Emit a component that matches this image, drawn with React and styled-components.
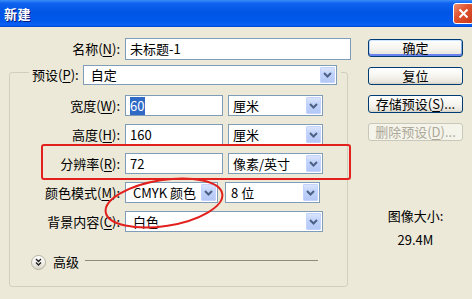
import React from "react";
import styled, { createGlobalStyle } from "styled-components";

const GlobalStyle = createGlobalStyle`
  html, body {
    margin: 0;
    padding: 0;
    background: #ece9d8;
    overflow: hidden;
  }
`;

const Window = styled.div`
  position: relative;
  width: 472px;
  height: 299px;
  overflow: hidden;
  background: #ece9d8;
  font-family: "Noto Sans CJK SC", "Noto Sans", sans-serif;
  font-size: 13px;
  line-height: 16px;
  color: #000;
`;

const TitleBar = styled.div`
  height: 27px;
  box-sizing: border-box;
  padding-left: 4px;
  display: flex;
  align-items: center;
  justify-content: space-between;
  background: linear-gradient(
    to bottom,
    #3c8ef8 0%,
    #0f62ee 12%,
    #0055e5 45%,
    #0059ec 80%,
    #0a63f3 92%,
    #0046cc 100%
  );
`;

const Title = styled.span`
  color: #fff;
  font-weight: bold;
  font-size: 13px;
  letter-spacing: 0.5px;
  text-shadow: 1px 1px 0 #0a1c7a;
`;

const CloseButton = styled.div`
  width: 21px;
  height: 21px;
  margin-right: -2px;
  box-sizing: border-box;
  border: 1px solid #fff;
  border-radius: 3px;
  background: linear-gradient(135deg, #ec8f72 0%, #e1552f 40%, #c8381a 100%);
  display: flex;
  align-items: center;
  justify-content: center;
`;

const Body = styled.div`
  display: flex;
  gap: 17px;
`;

const LeftCol = styled.div`
  width: 351px;
  padding-top: 11px;
  display: flex;
  flex-direction: column;
`;

const RightCol = styled.div`
  width: 95px;
  padding-top: 12px;
  display: flex;
  flex-direction: column;
`;

const Row = styled.div`
  display: flex;
  align-items: center;
  gap: ${(p) => p.$gap ?? 5}px;
`;

const Label = styled.span`
  width: ${(p) => (p.$w ? `${p.$w}px` : "auto")};
  text-align: right;
  white-space: nowrap;
`;

const Key = styled.span`
  text-decoration: underline;
  text-underline-offset: 2px;
`;

const Edit = styled.div`
  width: ${(p) => p.$w}px;
  height: ${(p) => p.$h ?? 21}px;
  box-sizing: border-box;
  border: 1px solid #7f9db9;
  background: #fff;
  padding-left: 4px;
  display: flex;
  align-items: center;
  white-space: nowrap;
`;

const Selected = styled.span`
  background: #316ac5;
  color: #fff;
  padding: 1px 1px 1px 0;
`;

const SelectBox = styled.div`
  width: ${(p) => p.$w}px;
  height: ${(p) => p.$h ?? 21}px;
  box-sizing: border-box;
  border: 1px solid #7f9db9;
  background: #fff;
  padding: 1px 1px 1px ${(p) => p.$pad ?? 4}px;
  display: flex;
  align-items: center;
  justify-content: space-between;
  white-space: nowrap;
`;

const DropButton = styled.div`
  width: 15px;
  height: 100%;
  box-sizing: border-box;
  border: 1px solid #c3d3fd;
  border-radius: 1px;
  background: linear-gradient(to bottom, #dbe5fb 0%, #c1d3fb 40%, #b4c8f6 100%);
  display: flex;
  align-items: center;
  justify-content: center;
`;

const Group = styled.fieldset`
  margin: -1px 0 0 9px;
  width: 339px;
  box-sizing: border-box;
  border: 1px solid #d0d0bf;
  border-radius: 3px;
  padding: 10px 0 16px 0;
  display: flex;
  flex-direction: column;
  gap: 8px;
`;

const Legend = styled.legend`
  margin-left: 19px;
  padding: 6px 4px 0 3px;
  display: flex;
  align-items: center;
  gap: 4px;
`;

const AdvancedRow = styled.div`
  margin-top: 14px;
  margin-left: 21px;
  height: 16px;
  display: flex;
  align-items: center;
  gap: 7px;
`;

const RoundToggle = styled.div`
  width: 15px;
  height: 15px;
  flex-shrink: 0;
  box-sizing: border-box;
  border-radius: 50%;
  border: 1px solid #b5b2a2;
  background: linear-gradient(to bottom, #ffffff 0%, #f1efe8 55%, #d8d5c8 100%);
  display: flex;
  align-items: center;
  justify-content: center;
`;

const Rule = styled.div`
  flex: none;
  width: 233px;
  height: 1px;
  margin: 0 0 3px -1px;
  background: #8e8b7c;
`;

const ButtonStack = styled.div`
  display: flex;
  flex-direction: column;
  gap: 10px;
`;

const Button = styled.div`
  height: 18px;
  box-sizing: border-box;
  border: 1px solid ${(p) => (p.$disabled ? "#c9c7ba" : "#003c74")};
  border-radius: 3px;
  background: ${(p) =>
    p.$disabled
      ? "#f5f4ea"
      : "linear-gradient(to bottom, #ffffff 0%, #f6f5f0 50%, #e9e7de 85%, #d6d0c5 100%)"};
  color: ${(p) => (p.$disabled ? "#aca899" : "#000")};
  box-shadow: ${(p) =>
    p.$default
      ? "inset 0 1px 0 #cee7ff, inset 0 -2px 0 #6982ee, inset 1px 0 0 #bcd4f6, inset -1px 0 0 #89ade4"
      : "none"};
  display: flex;
  align-items: center;
  justify-content: center;
  white-space: nowrap;
`;

const Info = styled.div`
  margin-top: 67px;
  display: flex;
  flex-direction: column;
  align-items: center;
  gap: 8px;
`;

const MarkRect = styled.div`
  position: absolute;
  left: 41px;
  top: 144px;
  width: 310px;
  height: 36px;
  box-sizing: border-box;
  border: 2px solid #e2211f;
  border-radius: 3px;
  pointer-events: none;
`;

const MarkEllipse = styled.svg`
  position: absolute;
  left: 98px;
  top: 172px;
  pointer-events: none;
`;

function Arrow() {
  return (
    <DropButton>
      <svg width="9" height="6" viewBox="0 0 9 6">
        <path d="M1 1 L4.5 4.5 L8 1" fill="none" stroke="#4d6185" strokeWidth="2" />
      </svg>
    </DropButton>
  );
}

function Select({ value, w, h, pad }) {
  return (
    <SelectBox $w={w} $h={h} $pad={pad}>
      <span>{value}</span>
      <Arrow />
    </SelectBox>
  );
}

export default function App() {
  return (
    <Window>
      <GlobalStyle />
      <TitleBar>
        <Title>新建</Title>
        <CloseButton>
          <svg width="11" height="11" viewBox="0 0 11 11">
            <path d="M1.5 1.5 L9.5 9.5 M9.5 1.5 L1.5 9.5" stroke="#fff" strokeWidth="2" />
          </svg>
        </CloseButton>
      </TitleBar>

      <Body>
        <LeftCol>
          <Row>
            <Label $w={120}>
              名称(<Key>N</Key>):
            </Label>
            <Edit $w={226} $h={22}>未标题-1</Edit>
          </Row>

          <Group>
            <Legend>
              <Label>
                预设(<Key>P</Key>):
              </Label>
              <Select value="自定" w={254} h={20} pad={7} />
            </Legend>

            <Row>
              <Label $w={110}>
                宽度(<Key>W</Key>):
              </Label>
              <Edit $w={98}>
                <Selected>60</Selected>
              </Edit>
              <Select value="厘米" w={95} />
            </Row>
            <Row>
              <Label $w={110}>
                高度(<Key>H</Key>):
              </Label>
              <Edit $w={98}>160</Edit>
              <Select value="厘米" w={95} />
            </Row>
            <Row>
              <Label $w={110}>
                分辨率(<Key>R</Key>):
              </Label>
              <Edit $w={98}>72</Edit>
              <Select value="像素/英寸" w={95} />
            </Row>
            <Row>
              <Label $w={110}>
                颜色模式(<Key>M</Key>):
              </Label>
              <Select value="CMYK 颜色" w={93} pad={7} />
              <Row $gap={0} style={{ marginLeft: 2 }}>
                <Select value="8 位" w={95} pad={5} />
              </Row>
            </Row>
            <Row>
              <Label $w={110}>
                背景内容(<Key>C</Key>):
              </Label>
              <Select value="白色" w={198} pad={7} />
            </Row>

            <AdvancedRow>
              <RoundToggle>
                <svg width="7" height="8" viewBox="0 0 7 8">
                  <path
                    d="M1 1 L3.5 3.5 L6 1 M1 4.5 L3.5 7 L6 4.5"
                    fill="none"
                    stroke="#222"
                    strokeWidth="1.4"
                  />
                </svg>
              </RoundToggle>
              <span>高级</span>
              <Rule />
            </AdvancedRow>
          </Group>
        </LeftCol>

        <RightCol>
          <ButtonStack>
            <Button $default>确定</Button>
            <Button>复位</Button>
            <Button>
              存储预设(<Key>S</Key>)...
            </Button>
            <Button $disabled>
              删除预设(<Key>D</Key>)...
            </Button>
          </ButtonStack>
          <Info>
            <span>图像大小:</span>
            <span>29.4M</span>
          </Info>
        </RightCol>
      </Body>

      <MarkRect />
      <MarkEllipse width="134" height="62" viewBox="0 0 134 62">
        <ellipse
          cx="66"
          cy="31"
          rx="59"
          ry="23"
          transform="rotate(-9 66 31)"
          fill="none"
          stroke="#e2211f"
          strokeWidth="2"
        />
      </MarkEllipse>
    </Window>
  );
}
